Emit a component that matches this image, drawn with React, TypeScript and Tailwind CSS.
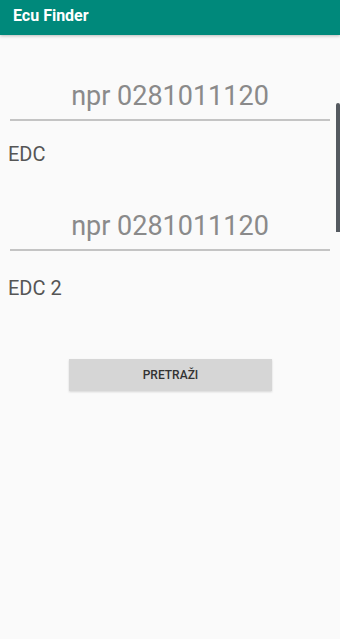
export default function App() {
  return (
    <div className="relative h-[639px] w-[340px] overflow-hidden bg-[#fafafa] font-['Roboto',sans-serif]">
      <div className="flex h-[35px] items-center bg-[#00897b] px-[13px] pb-[3px] shadow-[0_1px_3px_rgba(0,0,0,0.25)]">
        <span className="text-[16px] font-bold text-white">Ecu Finder</span>
      </div>

      <div className="flex flex-col">
        <div className="mx-[10px] mt-[44px] flex h-[42px] items-center justify-center border-b-2 border-[#c4c4c4] pb-[5px]">
          <span className="text-[27px] text-[#8a8a8a]">npr 0281011120</span>
        </div>
        <div className="mt-[22px] px-[8px] text-[20px] leading-[22px] text-[#555]">EDC</div>

        <div className="mx-[10px] mt-[44px] flex h-[42px] items-center justify-center border-b-2 border-[#c4c4c4] pb-[5px]">
          <span className="text-[27px] text-[#8a8a8a]">npr 0281011120</span>
        </div>
        <div className="mt-[26px] px-[8px] text-[20px] leading-[22px] text-[#555]">EDC 2</div>

        <div className="mt-[60px] flex justify-center">
          <button className="ml-[1px] flex h-[32px] w-[203px] items-center justify-center bg-[#d6d6d6] text-[12px] font-medium text-[#333] shadow-[0_1px_2px_rgba(0,0,0,0.15)]">
            PRETRAŽI
          </button>
        </div>
      </div>

      <div className="absolute right-0 top-[103px] h-[129px] w-[4px] rounded-t-[2px] bg-[#555a60]" />
    </div>
  );
}
